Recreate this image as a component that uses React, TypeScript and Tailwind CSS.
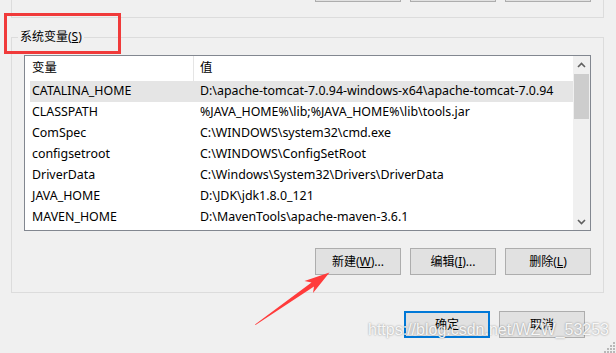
import React from 'react';

const rows = [
  { name: 'CATALINA_HOME', value: 'D:\\apache-tomcat-7.0.94-windows-x64\\apache-tomcat-7.0.94', selected: true },
  { name: 'CLASSPATH', value: '%JAVA_HOME%\\lib;%JAVA_HOME%\\lib\\tools.jar' },
  { name: 'ComSpec', value: 'C:\\WINDOWS\\system32\\cmd.exe' },
  { name: 'configsetroot', value: 'C:\\WINDOWS\\ConfigSetRoot' },
  { name: 'DriverData', value: 'C:\\Windows\\System32\\Drivers\\DriverData' },
  { name: 'JAVA_HOME', value: 'D:\\JDK\\jdk1.8.0_121' },
  { name: 'MAVEN_HOME', value: 'D:\\MavenTools\\apache-maven-3.6.1' },
];

const Chevron = ({ down }: { down?: boolean }) => (
  <svg width="9" height="6" viewBox="0 0 9 6">
    <polyline
      points={down ? '1,1 4.5,4.5 8,1' : '1,5 4.5,1.5 8,5'}
      fill="none"
      stroke="#606060"
      strokeWidth="1.6"
    />
  </svg>
);

const WinButton = ({ children, isDefault }: { children: React.ReactNode; isDefault?: boolean }) => (
  <div
    className={
      isDefault
        ? 'w-[86px] h-[27px] border-2 border-[#0078d7] bg-[#e1e1e1] flex items-center justify-center'
        : 'w-[86px] h-[27px] border border-[#adadad] bg-[#e1e1e1] flex items-center justify-center'
    }
  >
    {children}
  </div>
);

export default function App() {
  return (
    <div className="relative w-[616px] h-[353px] overflow-hidden bg-[#f0f0f0] text-[12px] text-black font-['Noto_Sans','Noto_Sans_CJK_SC',sans-serif]">
      {/* bottom of the user variables group */}
      <div className="ml-[11px] w-[593px] h-[18px] border-x border-b border-[#dcdcdc] flex justify-end gap-[9px] pr-[12px]">
        <div className="w-[86px] h-[2px] border-x border-b border-[#adadad] bg-[#e1e1e1]" />
        <div className="w-[86px] h-[2px] border-x border-b border-[#adadad] bg-[#e1e1e1]" />
        <div className="w-[86px] h-[2px] border-x border-b border-[#adadad] bg-[#e1e1e1]" />
      </div>

      {/* system variables group */}
      <fieldset className="ml-[11px] mt-[12px] w-[593px] border border-[#dcdcdc] pb-[17px]">
        <legend className="ml-[6px] px-[2px] leading-[14px]">
          系统变量(<span className="underline">S</span>)
        </legend>

        <div className="ml-[12px] mt-[11px] w-[567px] h-[176px] border border-[#828790] bg-white flex">
          <div className="flex-1 flex flex-col text-[12.4px]">
            <div className="h-[25px] flex">
              <div className="w-[168px] pl-[7px] flex items-center">变量</div>
              <div className="w-px bg-[#e5e5e5]" />
              <div className="pl-[6px] flex items-center">值</div>
            </div>
            {rows.map((r) => (
              <div
                key={r.name}
                className={r.selected ? 'ml-[5px] h-[21px] flex items-center bg-[#e5e5e5]' : 'ml-[5px] h-[21px] flex items-center'}
              >
                <div className="w-[170px] pl-[2px] whitespace-nowrap">{r.name}</div>
                <div className="whitespace-nowrap">{r.value}</div>
              </div>
            ))}
          </div>
          <div className="w-[17px] bg-[#f0f0f0] flex flex-col">
            <div className="h-[17px] flex items-center justify-center">
              <Chevron />
            </div>
            <div className="flex-1">
              <div className="mt-[1px] mx-[1px] h-[45px] bg-[#cdcdcd]" />
            </div>
            <div className="h-[17px] flex items-center justify-center">
              <Chevron down />
            </div>
          </div>
        </div>

        <div className="mt-[17px] flex justify-end gap-[9px] pr-[12px]">
          <WinButton>
            新建(<span className="underline">W</span>)...
          </WinButton>
          <WinButton>
            编辑(<span className="underline">I</span>)...
          </WinButton>
          <WinButton>
            删除(<span className="underline">L</span>)
          </WinButton>
        </div>
      </fieldset>

      <div className="mt-[18px] flex justify-end gap-[9px] pr-[31px]">
        <WinButton isDefault>确定</WinButton>
        <WinButton>取消</WinButton>
      </div>

      {/* annotations over the screenshot */}
      <div className="absolute left-[4px] top-[13px] w-[117px] h-[41px] border-[3px] border-[#f03a3a]" />

      <svg className="absolute left-0 top-0" width="616" height="353" viewBox="0 0 616 353">
        <polygon
          points="255,324.5 311.5,282.5 304.5,281 329.5,272.5 313,293 314,286.5 255.5,325"
          fill="#ff3b3b"
        />
      </svg>

      <div className="absolute left-[368px] top-[322px] leading-[16px] text-[16px] text-white/90 font-['Liberation_Sans',sans-serif] whitespace-nowrap [text-shadow:0_0_2px_rgba(0,0,0,0.45)]">
        https://blog.csdn.net/WZW_53253
      </div>

      <svg className="absolute right-0 bottom-0" width="12" height="12" viewBox="0 0 12 12">
        <rect x="9" y="1" width="2" height="2" fill="#b8b8b8" />
        <rect x="6" y="4" width="2" height="2" fill="#b8b8b8" />
        <rect x="9" y="4" width="2" height="2" fill="#b8b8b8" />
        <rect x="3" y="7" width="2" height="2" fill="#b8b8b8" />
        <rect x="6" y="7" width="2" height="2" fill="#b8b8b8" />
        <rect x="9" y="7" width="2" height="2" fill="#b8b8b8" />
        <rect x="0" y="10" width="2" height="2" fill="#b8b8b8" />
        <rect x="3" y="10" width="2" height="2" fill="#b8b8b8" />
        <rect x="6" y="10" width="2" height="2" fill="#b8b8b8" />
        <rect x="9" y="10" width="2" height="2" fill="#b8b8b8" />
      </svg>
    </div>
  );
}
